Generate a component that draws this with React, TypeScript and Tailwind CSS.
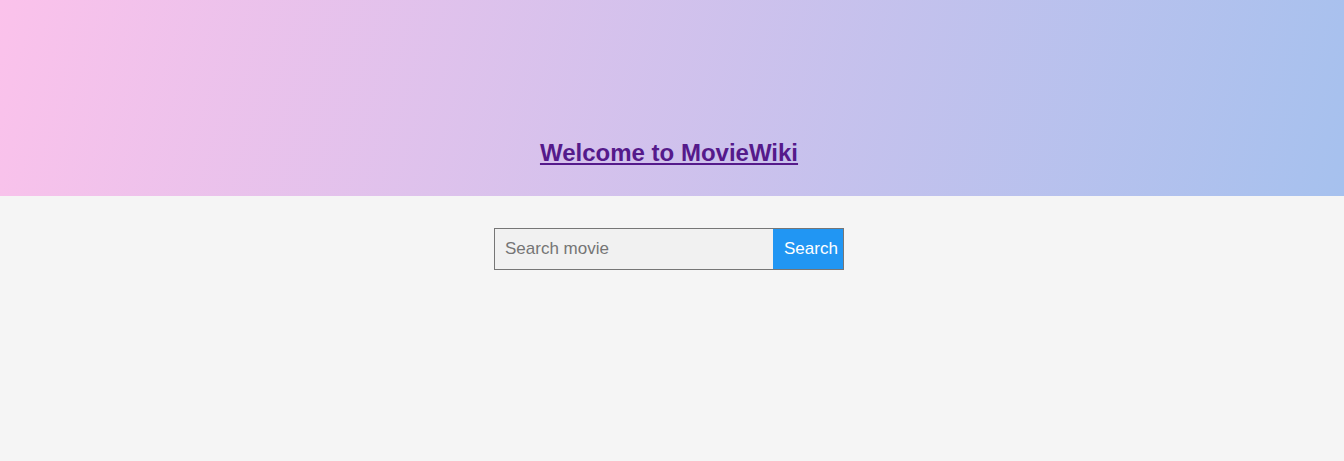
import React from "react";

export default function App() {
  return (
    <div
      className="min-h-[461px] w-full bg-[#f5f5f5]"
      style={{ fontFamily: '"Liberation Sans", Arial, sans-serif' }}
    >
      <header className="flex h-[196px] w-full items-end justify-center bg-[linear-gradient(105deg,#fbc2eb_0%,#a6c1ee_100%)] pb-[29px] pr-[6px]">
        <h1 className="text-[24px] font-bold leading-[28px]">
          <a href="#" className="text-[#551a8b] underline">
            Welcome to MovieWiki
          </a>
        </h1>
      </header>
      <div className="flex justify-center pt-[32px] pr-[6px]">
        <form className="flex" onSubmit={(e) => e.preventDefault()}>
          <input
            type="text"
            placeholder="Search movie"
            className="h-[42px] w-[279px] border border-r-0 border-[#767676] bg-[#f1f1f1] px-[10px] text-[17px] text-[#222] outline-none placeholder:text-[#757575]"
          />
          <button
            type="submit"
            className="h-[42px] w-[71px] border border-l-0 border-[#767676] bg-[#2196f3] pl-[11px] text-left text-[17px] text-white"
          >
            Search
          </button>
        </form>
      </div>
    </div>
  );
}
